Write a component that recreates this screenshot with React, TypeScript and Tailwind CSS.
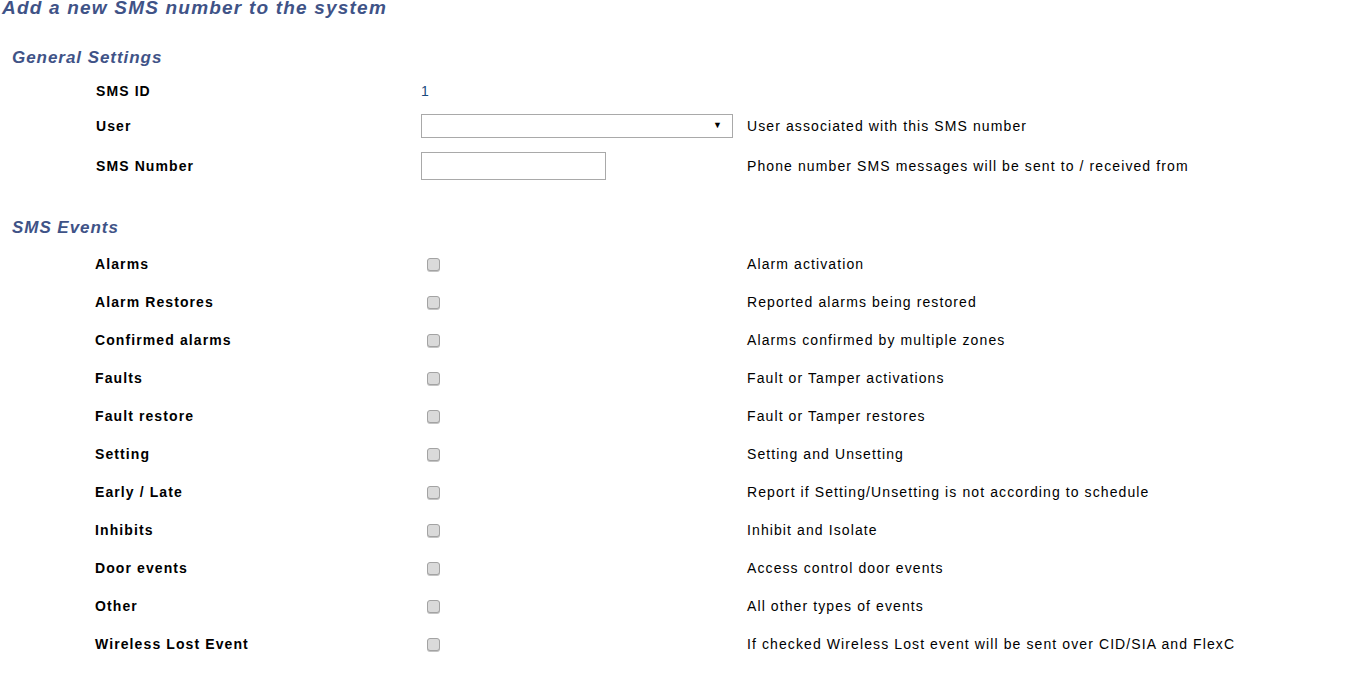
import React from "react";

interface event {
  label: string;
  desc: string;
}

const events: event[] = [
  { label: "Alarms", desc: "Alarm activation" },
  { label: "Alarm Restores", desc: "Reported alarms being restored" },
  { label: "Confirmed alarms", desc: "Alarms confirmed by multiple zones" },
  { label: "Faults", desc: "Fault or Tamper activations" },
  { label: "Fault restore", desc: "Fault or Tamper restores" },
  { label: "Setting", desc: "Setting and Unsetting" },
  { label: "Early / Late", desc: "Report if Setting/Unsetting is not according to schedule" },
  { label: "Inhibits", desc: "Inhibit and Isolate" },
  { label: "Door events", desc: "Access control door events" },
  { label: "Other", desc: "All other types of events" },
  { label: "Wireless Lost Event", desc: "If checked Wireless Lost event will be sent over CID/SIA and FlexC" },
];

const Check = () => (
  <span className="block w-[13px] h-[13px] rounded-[3px] border border-[#a3a3a3] bg-[#dadada] shadow-[0_1px_0_#c4c4c4]" />
);

const App = () => {
  return (
    <div className="min-h-screen bg-white text-[14px] tracking-[1.1px] text-black font-['Liberation_Sans',Arial,sans-serif]">
      <h1 className="pl-[2px] -mt-[3px] text-[19px] leading-[22px] font-bold italic tracking-[1.2px] text-[#3f5387]">
        Add a new SMS number to the system
      </h1>

      <h2 className="pl-[12px] mt-[29px] text-[17px] leading-[20px] font-bold italic tracking-[0.95px] text-[#3f5387]">
        General Settings
      </h2>

      <div className="mt-[6px] pl-[96px]">
        <div className="flex items-center h-[34px]">
          <div className="w-[325px] font-bold">SMS ID</div>
          <div className="w-[326px] text-[#1a4b7d]">1</div>
        </div>
        <div className="flex items-center h-[36px]">
          <div className="w-[325px] font-bold">User</div>
          <div className="w-[326px]">
            <div className="w-[312px] h-[24px] border border-[#a9a9a9] flex items-center justify-end pr-[9px] text-[9px]">
              ▼
            </div>
          </div>
          <div>User associated with this SMS number</div>
        </div>
        <div className="flex items-center h-[44px]">
          <div className="w-[325px] font-bold">SMS Number</div>
          <div className="w-[326px]">
            <div className="w-[185px] h-[28px] border border-[#a9a9a9]" />
          </div>
          <div>Phone number SMS messages will be sent to / received from</div>
        </div>
      </div>

      <h2 className="pl-[12px] mt-[30px] text-[17px] leading-[20px] font-bold italic tracking-[0.95px] text-[#3f5387]">
        SMS Events
      </h2>

      <div className="mt-[7px] pl-[95px]">
        {events.map((e) => {
          return (
            <div key={e.label} className="flex items-center h-[38px]">
              <div className="w-[332px] font-bold">{e.label}</div>
              <div className="w-[320px]">
                <Check />
              </div>
              <div>{e.desc}</div>
            </div>
          );
        })}
      </div>
    </div>
  );
};

export default App;
